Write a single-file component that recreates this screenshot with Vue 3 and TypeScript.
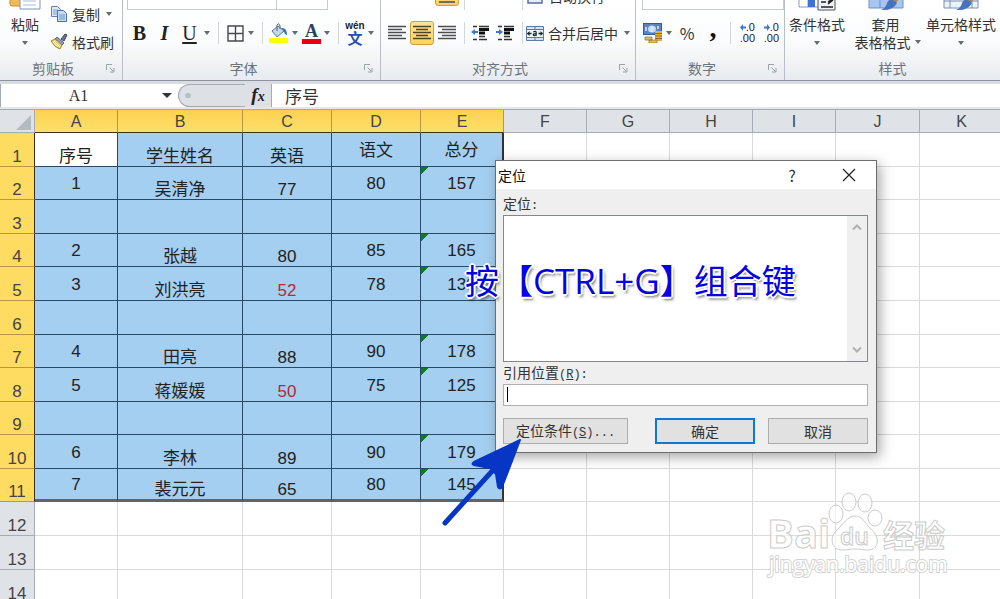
<script setup lang="ts">
import { ref } from 'vue'

interface Row {
  n: number
  tall: boolean
  cells: string[]
}

const columns = ['A', 'B', 'C', 'D', 'E', 'F', 'G', 'H', 'I', 'J', 'K']

const content: string[][] = [
  ['序号', '学生姓名', '英语', '语文', '总分'],
  ['1', '吴清净', '77', '80', '157'],
  [],
  ['2', '张越', '80', '85', '165'],
  ['3', '刘洪亮', '52', '78', '130'],
  [],
  ['4', '田亮', '88', '90', '178'],
  ['5', '蒋媛媛', '50', '75', '125'],
  [],
  ['6', '李林', '89', '90', '179'],
  ['7', '裴元元', '65', '80', '145'],
  [],
  [],
  []
]

const shortRows = [2, 4, 7, 9, 11]

const rows: Row[] = content.map((cells, i) => ({
  n: i + 1,
  tall: !shortRows.includes(i + 1),
  cells: columns.map((_, c) => cells[c] ?? '')
}))

const cellClass = (row: Row, c: number) => ({
  picked: row.n <= 11 && c < 5,
  active: row.n === 1 && c === 0,
  low: c === 1 || c === 2 || (row.n === 1 && c === 0),
  edge: row.n <= 11 && c === 4,
  last: row.n === 11 && c < 5,
  failed: c === 2 && row.n > 1 && Number(row.cells[c]) > 0 && Number(row.cells[c]) < 60,
  flagged: c === 4 && row.n > 1 && row.cells[c] !== ''
})

const nameBox = ref('A1')
const formula = ref('序号')
const reference = ref('')
</script>

<template>
  <div class="window">
    <header class="ribbon">
      <section class="group clip">
        <div class="tools across">
          <button class="big paste" type="button">
            <svg width="36" height="32" viewBox="0 0 36 32">
              <rect x="3" y="2" width="24" height="25" rx="2" fill="#f0b95c" stroke="#c98a2c" />
              <path d="M13 6h15l5 5v19H13z" fill="#fff" stroke="#7d93b4" />
              <path d="M16 14h13M16 18h13M16 22h13M16 26h13" stroke="#a9bbd6" />
            </svg>
            <span>粘贴</span>
            <i class="tri"></i>
          </button>
          <div class="stack">
            <button class="line-btn" type="button">
              <svg width="18" height="18" viewBox="0 0 18 18">
                <path d="M1.500 1.500h6l3 3v7h-9z" fill="#dbe8f8" stroke="#6184b8" />
                <path d="M3 5h5M3 7h5M3 9h5" stroke="#7fa2d3" />
                <path d="M7.500 5.500h6l3 3v8h-9z" fill="#c7dbf4" stroke="#4a70ab" />
                <path d="M9 10h6M9 12h6M9 14h6" stroke="#6f96cd" />
              </svg>
              复制<i class="tri"></i>
            </button>
            <button class="line-btn" type="button">
              <svg width="18" height="18" viewBox="0 0 18 18">
                <path d="M11 6l4-5 2 1-3 6z" fill="#6e6f94" stroke="#45466b" />
                <path d="M7 4l7 6-2 2-7-6z" fill="#8f9ab8" stroke="#5a648a" />
                <path d="M1 8l4-2 7 6-2 4q-5-1-9-8z" fill="#e9d777" stroke="#a38930" />
                <path d="M4 8l6 6M3 9l5 5" stroke="#fff8c9" />
              </svg>
              格式刷
            </button>
          </div>
        </div>
        <h2 class="caption"><span>剪贴板</span><svg class="launch" width="9" height="9" viewBox="0 0 9 9"><path d="M.5 6V.5H6M3.500 3.500l4 4M8 4v4H4" /></svg></h2>
      </section>

      <section class="group font">
        <div class="tools">
          <div class="bar upper">
            <select class="font-name" aria-label="字体名称"></select>
            <select class="font-size" aria-label="字号"></select>
            <button class="ico letter" type="button">A</button>
            <button class="ico letter" type="button">A</button>
          </div>
          <div class="bar">
            <button class="ico serif bold" type="button">B</button>
            <button class="ico serif italic" type="button">I</button>
            <button class="ico serif under" type="button">U</button>
            <button class="more" type="button" aria-label="下划线选项"><i class="tri"></i></button>
            <i class="sep"></i>
            <button class="ico" type="button" aria-label="边框">
              <svg width="17" height="17" viewBox="0 0 17 17"><path d="M1 1h15v15H1zM8.500 1v15M1 8.500h15" fill="none" stroke="#454a50" stroke-width="1.400" /></svg>
            </button>
            <button class="more" type="button" aria-label="边框选项"><i class="tri"></i></button>
            <i class="sep"></i>
            <button class="ico" type="button" aria-label="填充颜色">
              <svg width="20" height="20" viewBox="0 0 20 20">
                <path d="M3 8l6-5 6 5-7 6z" fill="#c5d6e8" stroke="#5d7592" />
                <path d="M8 8V2q2-3 3 1v3" fill="none" stroke="#4a5f7c" />
                <path d="M12 5q6-1 6 7-3-1-3-4z" fill="#3c6fb8" />
                <path d="M0 15h19v5H0z" fill="#ffff00" />
              </svg>
            </button>
            <button class="more" type="button" aria-label="填充颜色选项"><i class="tri"></i></button>
            <button class="ico color-a" type="button">A</button>
            <button class="more" type="button" aria-label="字体颜色选项"><i class="tri"></i></button>
            <i class="sep"></i>
            <button class="ico pinyin" type="button"><span>wén</span><b>文</b></button>
            <button class="more" type="button" aria-label="拼音选项"><i class="tri"></i></button>
          </div>
        </div>
        <h2 class="caption"><span>字体</span><svg class="launch" width="9" height="9" viewBox="0 0 9 9"><path d="M.5 6V.5H6M3.500 3.500l4 4M8 4v4H4" /></svg></h2>
      </section>

      <section class="group align">
        <div class="tools">
          <div class="bar upper">
            <i class="hole"></i>
            <i class="hole"></i>
            <button class="ico on upper-on" type="button" aria-label="底端对齐">
              <svg width="18" height="18" viewBox="0 0 18 18"><path d="M1 11h16M4 14h10M1 17h16" stroke="#4a4a48" stroke-width="1.500" /></svg>
            </button>
            <i class="sep"></i>
            <i class="hole"></i>
            <i class="hole"></i>
            <i class="sep"></i>
            <button class="line-btn wrap" type="button">
              <svg width="16" height="18" viewBox="0 0 16 18"><path d="M1 1h14v15H1z" fill="#e4edf8" stroke="#54719e" stroke-width="1.500" /></svg>
              自动换行
            </button>
          </div>
          <div class="bar">
            <button class="ico" type="button" aria-label="左对齐">
              <svg width="18" height="16" viewBox="0 0 18 16"><path d="M0 1.500h18M0 4.500h14M0 7.500h18M0 10.500h14M0 13.500h18" stroke="#4a4d52" stroke-width="1.300" /></svg>
            </button>
            <button class="ico on" type="button" aria-label="居中">
              <svg width="18" height="16" viewBox="0 0 18 16"><path d="M0 1.500h18M3 4.500h12M0 7.500h18M3 10.500h12M0 13.500h18" stroke="#4f4326" stroke-width="1.300" /></svg>
            </button>
            <button class="ico" type="button" aria-label="右对齐">
              <svg width="18" height="16" viewBox="0 0 18 16"><path d="M0 1.500h18M4 4.500h14M0 7.500h18M4 10.500h14M0 13.500h18" stroke="#4a4d52" stroke-width="1.300" /></svg>
            </button>
            <i class="sep"></i>
            <button class="ico" type="button" aria-label="减少缩进量">
              <svg width="18" height="16" viewBox="0 0 18 16">
                <path d="M2 1.500h4M8 1.500h10M2 14.500h4M8 14.500h8M8 11.500h6" stroke="#333" stroke-width="1.300" />
                <path d="M8 4.500h10M8 8h6" stroke="#111" stroke-width="3" />
                <path d="M0 7l4-3v2h3v2H4v2z" fill="#3c78cc" />
              </svg>
            </button>
            <button class="ico" type="button" aria-label="增加缩进量">
              <svg width="18" height="16" viewBox="0 0 18 16">
                <path d="M2 1.500h4M8 1.500h10M2 14.500h4M8 14.500h8M8 11.500h6" stroke="#333" stroke-width="1.300" />
                <path d="M8 4.500h10M8 8h6" stroke="#111" stroke-width="3" />
                <path d="M7 7L3 4v2H0v2h3v2z" fill="#3c78cc" />
              </svg>
            </button>
            <i class="sep"></i>
            <button class="line-btn" type="button">
              <svg width="18" height="15" viewBox="0 0 18 15">
                <path d="M.5.500h17v14H.5zM.5 3.500h17M.5 11.500h17M9 .5v3M9 11.500v3" fill="#d3e2f5" stroke="#5c7ba8" />
                <path d="M1 4h16v7H1z" fill="#eef4fc" />
                <path d="M1.500 7.500h4M16.500 7.500h-4" stroke="#222" stroke-width="1.300" />
                <path d="M1 7.500l2.500-2.500v5zM17 7.500l-2.500-2.500v5z" fill="#222" />
                <path d="M7.300 6q2.700-1.500 2.900.8v3M10.200 7.500q-3.200 0-2.900 1.500.9 1.300 2.900-.3" fill="none" stroke="#222" stroke-width="1.200" />
              </svg>
              合并后居中<i class="tri"></i>
            </button>
          </div>
        </div>
        <h2 class="caption"><span>对齐方式</span><svg class="launch" width="9" height="9" viewBox="0 0 9 9"><path d="M.5 6V.5H6M3.500 3.500l4 4M8 4v4H4" /></svg></h2>
      </section>

      <section class="group number">
        <div class="tools">
          <div class="bar upper">
            <select class="format" aria-label="数字格式"><option>常规</option></select>
          </div>
          <div class="bar">
            <button class="ico" type="button" aria-label="会计数字格式">
              <svg width="20" height="20" viewBox="0 0 20 20">
                <rect x=".5" y=".5" width="18" height="11" fill="#5a82c4" stroke="#34589a" />
                <ellipse cx="9" cy="6" rx="4" ry="3.500" fill="#c9daf3" />
                <path d="M3 4v4M15 3v3M9 3v6" stroke="#dfe9f8" stroke-width="1.500" />
                <path d="M12 8h7v10h-7z" fill="#e3b13e" />
                <path d="M12 10.500h7M12 13h7M12 15.500h7" stroke="#98691b" />
                <path d="M2 14h7v3H2zM6 17h8v3H6z" fill="#e8bd54" stroke="#98691b" stroke-width=".7" />
              </svg>
            </button>
            <button class="more" type="button" aria-label="货币选项"><i class="tri"></i></button>
            <button class="ico wide" type="button">%</button>
            <button class="ico wide comma" type="button">,</button>
            <i class="sep thin"></i>
            <button class="ico dec" type="button">
              <span><svg width="6" height="7" viewBox="0 0 6 7"><path d="M0 3.500L3 0v2.500h3v2H3V7z" fill="#3c78cc" /></svg>.0</span>
              <span>.00</span>
            </button>
            <button class="ico dec" type="button">
              <span><svg width="6" height="7" viewBox="0 0 6 7"><path d="M6 3.500L3 0v2.500H0v2h3V7z" fill="#3c78cc" /></svg>.0</span>
              <span>.00</span>
            </button>
          </div>
        </div>
        <h2 class="caption"><span>数字</span><svg class="launch" width="9" height="9" viewBox="0 0 9 9"><path d="M.5 6V.5H6M3.500 3.500l4 4M8 4v4H4" /></svg></h2>
      </section>

      <section class="group styles">
        <div class="tools across spread">
          <button class="big" type="button">
            <svg width="38" height="32" viewBox="0 0 38 32">
              <path d="M1 1h28v27H1zM10 1v27M1 10h28M1 19h28" fill="#fff" stroke="#8b9bb3" />
              <path d="M10 1h7v27h-7z" fill="#3f72d8" />
              <path d="M20 14h17v17H20z" fill="#eef1f5" stroke="#555" />
              <path d="M23 19h5M23 23h5M23 28h12M30 17l5 3-5 3M35 21l-5 4" fill="none" stroke="#222" stroke-width="1.500" />
            </svg>
            <span>条件格式</span>
            <i class="tri"></i>
          </button>
          <button class="big" type="button">
            <svg width="36" height="32" viewBox="0 0 36 32">
              <path d="M1 1h34v28H1zM12 1v28M24 1v28M1 20h34" fill="#a9c6f2" stroke="#6c8fc7" />
              <path d="M35 8L24 20l4 4 8-11z" fill="#b98240" />
              <path d="M24 20l5 4q-4 8-16 7 5-2 6-7 2-4 5-4z" fill="#4474c0" />
            </svg>
            <span>套用</span>
            <span class="with-tri">表格格式<i class="tri"></i></span>
          </button>
          <button class="big" type="button">
            <svg width="36" height="32" viewBox="0 0 36 32">
              <path d="M1 1h34v28H1zM7 1v28M29 1v28M1 22h34" fill="#edf2fa" stroke="#7d90b0" />
              <path d="M35 8L24 20l4 4 8-11z" fill="#b98240" />
              <path d="M24 20l5 4q-4 8-16 7 5-2 6-7 2-4 5-4z" fill="#4474c0" />
            </svg>
            <span>单元格样式</span>
            <i class="tri"></i>
          </button>
        </div>
        <h2 class="caption"><span>样式</span></h2>
      </section>
    </header>

    <div class="formula-bar">
      <div class="name-box">
        <input v-model="nameBox" aria-label="名称框" />
        <i class="tri dark"></i>
      </div>
      <div class="fx-area">
        <div class="pill"><i></i></div>
        <button class="fx" type="button">f<small>x</small></button>
      </div>
      <input v-model="formula" class="formula" aria-label="编辑栏" />
    </div>

    <main class="sheet">
      <table>
        <colgroup>
          <col class="c-head" />
          <col v-for="c in columns" :key="c" :class="'c-' + c" />
        </colgroup>
        <thead>
          <tr>
            <th class="corner"><svg width="15" height="15" viewBox="0 0 15 15"><path d="M15 0v15H0z" fill="#b4bac2" /></svg></th>
            <th v-for="(c, i) in columns" :key="c" scope="col" :class="{ lit: i < 5 }">{{ c }}</th>
          </tr>
        </thead>
        <tbody>
          <tr v-for="row in rows" :key="row.n" :class="{ tall: row.tall }">
            <th scope="row" :class="{ lit: row.n <= 11 }">{{ row.n }}</th>
            <td v-for="(text, c) in row.cells" :key="c" :class="cellClass(row, c)">{{ text }}</td>
          </tr>
        </tbody>
      </table>
    </main>

    <form class="dialog" role="dialog" aria-labelledby="goto-title" @submit.prevent>
      <div class="titlebar">
        <h1 id="goto-title">定位</h1>
        <button type="button" class="help">?</button>
        <button type="button" class="close" aria-label="关闭">
          <svg width="14" height="14" viewBox="0 0 14 14"><path d="M1 1l12 12M13 1L1 13" stroke="#222" stroke-width="1.200" /></svg>
        </button>
      </div>
      <div class="dialog-body">
        <label for="places">定位<span class="mono">:</span></label>
        <div class="list">
          <select id="places" size="6"></select>
          <div class="scroll">
            <button type="button" aria-label="向上滚动"><svg width="10" height="8" viewBox="0 0 10 8"><path d="M1 6.500l4-4 4 4" /></svg></button>
            <button type="button" aria-label="向下滚动"><svg width="10" height="8" viewBox="0 0 10 8"><path d="M1 1.500l4 4 4-4" /></svg></button>
          </div>
        </div>
        <label for="reference">引用位置<span class="mono">(<u>R</u>):</span></label>
        <div class="entry">
          <input id="reference" v-model="reference" />
          <i class="caret"></i>
        </div>
        <div class="actions">
          <button type="button" class="special">定位条件<span class="mono">(<u>S</u>)...</span></button>
          <button type="submit" class="primary">确定</button>
          <button type="button">取消</button>
        </div>
      </div>
    </form>

    <p class="callout">按【<span>CTRL+G</span>】组合键</p>

    <svg class="arrow" width="84" height="92" viewBox="0 0 84 92">
      <path d="M5 87L54 33" stroke="#0836c4" stroke-width="5" stroke-linecap="round" />
      <path d="M80 4L34 26q-3 2 0 3l16 3 6 6 2 13q2 3 4 0z" fill="#0836c4" stroke="#0836c4" stroke-width="2" stroke-linejoin="round" />
    </svg>

    <svg class="watermark" width="190" height="96" viewBox="0 0 190 96">
      <g fill="#fff" fill-opacity=".6" stroke="#cbcbcb">
        <ellipse cx="71" cy="26" rx="7" ry="9" />
        <ellipse cx="84" cy="14" rx="7" ry="9" />
        <ellipse cx="100" cy="15" rx="7" ry="9" />
        <ellipse cx="110" cy="30" rx="7" ry="8" />
        <path d="M90 28c8 0 11 9 17 14 8 7 7 20-4 20-5 0-8-1-13-1s-8 1-13 1c-11 0-13-13-5-20 6-5 10-14 18-14z" />
        <text x="2" y="60" font-size="40" font-weight="700" class="latin">Bai</text>
        <text x="75" y="57" font-size="23" font-weight="600" class="latin">du</text>
        <text x="118" y="59" font-size="31" font-weight="700" class="cjk">经验</text>
      </g>
      <text x="4" y="84" font-size="21" fill="#fff" stroke="#d4d4d4" stroke-width="2" paint-order="stroke" class="latin">jingyan.baidu.com</text>
    </svg>
  </div>
</template>

<style>
html,
body {
  margin: 0;
  height: 100%;
  overflow: hidden;
}

#app {
  height: 100%;
}
</style>

<style scoped>
.window {
  position: relative;
  display: flex;
  flex-direction: column;
  height: 100%;
  overflow: hidden;
  background: #fff;
  color: #333;
  font: 14px/18px "Noto Sans CJK SC", sans-serif;
}

button,
input,
select {
  box-sizing: border-box;
  margin: 0;
  padding: 0;
  border: 0;
  border-radius: 0;
  background: none;
  color: inherit;
  font: inherit;
  appearance: none;
  outline: 0;
}

svg {
  display: block;
  flex: none;
  fill: none;
}

/* Ribbon */
.ribbon {
  display: flex;
  flex: none;
  height: 80px;
  overflow: hidden;
  border-bottom: 1px solid #8d949f;
  background: linear-gradient(#fff 0%, #fbfcfd 50%, #e8ebef 100%);
}

.group {
  box-sizing: border-box;
  display: flex;
  flex-direction: column;
  flex: none;
  height: 80px;
  border-right: 1px solid #b9bec6;
}

.clip { width: 123px; }
.font { width: 258px; }
.align { width: 255px; }
.number { width: 149px; }
.styles { flex: 1; border-right: 0; }

.tools {
  display: flex;
  flex: none;
  flex-direction: column;
  justify-content: flex-end;
  gap: 9px;
  box-sizing: border-box;
  height: 58px;
  padding: 0 0 11px 4px;
}

.tools.across {
  flex-direction: row;
  justify-content: flex-start;
  align-items: flex-end;
  gap: 0;
  padding: 0 0 7px;
}

.tools.spread {
  justify-content: space-between;
  padding: 0 4px 7px;
}

.number .tools { padding-left: 6px; }

.caption {
  display: flex;
  align-items: center;
  height: 20px;
  margin: 0;
  padding: 0 7px 0 0;
  color: #6c747e;
  font-size: 14px;
  font-weight: 400;
}

.caption span {
  flex: 1;
  text-align: center;
}

.styles .caption { padding: 0; }
.launch { stroke: #9aa1aa; }

.big {
  display: flex;
  flex-direction: column;
  flex: none;
  align-items: center;
}

.big svg { margin-bottom: 4px; }
.big .tri { margin: 8px 0 6px; }
.paste { width: 50px; }

.with-tri {
  display: flex;
  align-items: center;
  gap: 4px;
}

.big .with-tri .tri {
  margin: 0 -4px 0 0;
}

.stack {
  display: flex;
  flex-direction: column;
  gap: 10px;
}

.line-btn {
  display: flex;
  align-items: center;
  gap: 4px;
  white-space: nowrap;
}

.line-btn .tri { margin-left: 2px; }

.tri {
  width: 0;
  height: 0;
  flex: none;
  border: 3px solid transparent;
  border-top: 4px solid #646a72;
  border-bottom: 0;
}

.bar {
  display: flex;
  flex: none;
  align-items: center;
  height: 28px;
}

.bar.upper {
  align-items: flex-end;
  height: 10px;
}

.ico {
  display: flex;
  flex: none;
  align-items: center;
  justify-content: center;
  width: 22px;
  height: 24px;
}

.more {
  display: flex;
  flex: none;
  align-items: center;
  justify-content: center;
  width: 10px;
  height: 24px;
}

.wide { width: 26px; font-size: 16px; }

.sep {
  flex: none;
  width: 12px;
  height: 22px;
  background: linear-gradient(#d3d7dc, #d3d7dc) center / 1px 100% no-repeat;
}

.upper .sep { height: 15px; }

.serif {
  width: 25px;
  color: #222;
  font: 20px/24px "Liberation Serif", serif;
}

.bold { font-weight: 700; }
.italic { font-style: italic; font-weight: 700; }
.under { text-decoration: underline; text-underline-offset: 2px; }

.font-name,
.font-size,
.format {
  height: 25px;
  padding: 0 6px 10px;
  border: 1px solid #c6cbd2;
  background: #fff;
}

.font-name { width: 150px; }
.font-size { width: 52px; margin-left: -1px; }
.format { width: 142px; }

.letter {
  height: 28px;
  padding-bottom: 4px;
  font: 700 18px/18px "Liberation Serif", serif;
}

.color-a {
  width: 19px;
  height: 21px;
  align-items: flex-start;
  margin: 0 1px 0 2px;
  border-bottom: 5px solid #e8000b;
  color: #2a4068;
  font: 700 18px/16px "Liberation Serif", serif;
}

.pinyin {
  flex-direction: column;
  color: #222;
}

.pinyin span {
  font: 700 10px/10px "Liberation Sans", sans-serif;
}

.pinyin b {
  color: #2450b8;
  font-size: 15px;
  line-height: 14px;
}

.align .ico,
.align .hole { width: 24px; margin-right: 1px; }
.align .sep { width: 8px; }

.on {
  box-sizing: border-box;
  border: 1px solid #c9a044;
  border-radius: 3px;
  background: linear-gradient(#fde39a, #fdd35c);
}

.upper-on { margin-bottom: 4px; }
.wrap { height: 28px; }
.wrap svg { margin: 0 2px 0 1px; }

.comma {
  padding-bottom: 10px;
  color: #111;
  font: 700 28px/20px "Liberation Serif", serif;
}

.thin { width: 8px; }

.dec {
  flex-direction: column;
  align-items: flex-end;
  width: 24px;
  padding-right: 3px;
  color: #222;
  font: 11px/11px "Liberation Sans", sans-serif;
}

.dec span {
  display: flex;
  align-items: center;
}

/* Formula bar */
.formula-bar {
  display: flex;
  flex: none;
  height: 23px;
  padding-bottom: 2px;
  border-top: 3px solid #d9dde3;
  border-bottom: 1px solid #a3aab4;
  background: #e3e7ec;
}

.name-box {
  box-sizing: border-box;
  display: flex;
  align-items: center;
  width: 178px;
  padding-right: 6px;
  border-left: 1px solid #a3aab4;
  background: #fff;
}

.name-box input {
  flex: 1;
  min-width: 0;
  padding-right: 6px;
  text-align: center;
  font: 16px/22px "Liberation Serif", serif;
}

.dark {
  border-width: 5px 5px 0;
  border-top-color: #333;
}

.fx-area {
  box-sizing: border-box;
  display: flex;
  width: 94px;
  border-right: 1px solid #a3aab4;
  background: linear-gradient(90deg, #fff 10px, #dde1e6 10px);
}

.pill {
  flex: 1;
  padding: 8px 0 0 6px;
  border: 1px solid #a3aab4;
  border-width: 1px 0 1px 1px;
  border-radius: 12px 0 0 12px;
  background: #dde1e6;
}

.pill i {
  display: block;
  width: 6px;
  height: 5px;
  border-radius: 3px;
  background: #b7bdc5;
}

.fx {
  width: 26px;
  color: #222;
  font: italic 700 19px/22px "Liberation Serif", serif;
  text-align: center;
}

.fx small { font-size: 14px; }

.formula {
  flex: 1;
  min-width: 0;
  padding-left: 13px;
  background: #fff;
  font-size: 17px;
}

/* Sheet */
.sheet {
  flex: 1;
  min-height: 0;
  overflow: hidden;
}

table {
  width: max-content;
  border-spacing: 0;
  color: #222;
  font: 17px/18px "Liberation Sans", "Noto Sans CJK SC", sans-serif;
}

.c-head { width: 35px; }
.c-A, .c-E, .c-F, .c-G, .c-H, .c-I { width: 83px; }
.c-B { width: 125px; }
.c-C, .c-D { width: 89px; }
.c-J, .c-K { width: 84px; }

th,
td {
  box-sizing: border-box;
  padding: 2px 0 0;
  border: 0 solid #dadada;
  border-width: 0 1px 1px 0;
  text-align: center;
  vertical-align: middle;
  font-weight: 400;
}

thead th {
  height: 23px;
  border-color: #a7adb6;
  background: #dfe3e8;
  color: #444;
  font-size: 16px;
}

thead th.lit {
  border-color: #bd953e;
  border-bottom-color: #3d3418;
  background: linear-gradient(#fcd14f, #fde06c);
}

.corner svg { margin: 1px 3px 0 auto; }

tbody tr { height: 33px; }
tbody tr.tall { height: 34px; }

tbody th {
  border-color: #a7adb6;
  background: #dfe3e8;
  color: #444;
  vertical-align: bottom;
}

tbody th.lit {
  border-color: #bd953e;
  border-right-color: #3a2f16;
  background: #fedb61;
}

.picked {
  border-color: #274a68;
  background: #a5cff0;
}

.active { background: #fff; }
.low { vertical-align: bottom; }
.edge { border-right: 2px solid #333; }
.last { border-bottom: 3px solid #5e6468; }
.failed { color: #b22a35; }

.flagged {
  background: linear-gradient(135deg, #0a7d20 5px, transparent 5px) #a5cff0;
}

/* Go To dialog */
.dialog {
  position: absolute;
  top: 160px;
  left: 495px;
  box-sizing: border-box;
  width: 382px;
  border: 1px solid #6e6e6e;
  background: #efefef;
  box-shadow: 3px 4px 12px rgba(0, 0, 0, 0.35);
}

.titlebar {
  display: flex;
  align-items: center;
  height: 28px;
  padding: 0 20px 0 2px;
  background: #fff;
}

.titlebar h1 {
  flex: 1;
  margin: 0;
  color: #111;
  font-size: 14px;
  font-weight: 400;
}

.help {
  width: 16px;
  margin-right: 42px;
  font-size: 16px;
}

.dialog-body {
  display: flex;
  flex-direction: column;
  padding: 4px 8px 8px 7px;
}

.dialog-body label {
  height: 22px;
  line-height: 20px;
}

.mono {
  font-family: "Liberation Mono", monospace;
  font-size: 12px;
}

.list {
  display: flex;
  box-sizing: border-box;
  height: 147px;
  border: 1px solid #84878c;
  background: #fff;
}

.list select {
  flex: 1;
  height: 100%;
  overflow: hidden;
}

.scroll {
  display: flex;
  flex-direction: column;
  justify-content: space-between;
  width: 20px;
  background: #efefef;
}

.scroll button {
  display: flex;
  align-items: center;
  justify-content: center;
  height: 22px;
}

.scroll svg {
  stroke: #b0b0b0;
  stroke-width: 2;
}

.entry {
  position: relative;
  display: flex;
}

.entry input {
  flex: 1;
  height: 22px;
  padding: 0 4px;
  border: 1px solid #b0b0b0;
  background: #fff;
}

.caret {
  position: absolute;
  top: 3px;
  left: 4px;
  width: 1px;
  height: 15px;
  background: #000;
}

.actions {
  display: flex;
  gap: 13px;
  margin-top: 12px;
}

.actions button {
  width: 100px;
  height: 26px;
  border: 1px solid #adadad;
  background: #e1e1e1;
}

.actions .special {
  width: 125px;
  margin-right: auto;
}

.actions .primary { border: 2px solid #0f78d0; }

/* Annotations over the sheet */
.callout {
  position: absolute;
  top: 258px;
  left: 465px;
  margin: 0;
  color: #0202e4;
  font: 34px/46px "Open Sans", "Noto Sans CJK SC", sans-serif;
  text-spacing-trim: space-all;
  white-space: nowrap;
  text-shadow: -1px -1px 0 #fff, 1px -1px 0 #fff, -1px 1px 0 #fff, 1px 1px 0 #fff, 0 2px 0 #fff,
    2px 0 0 #fff, -2px 0 0 #fff, 0 -2px 0 #fff, 2px 3px 3px rgba(0, 0, 0, 0.6);
}

.callout span { font-size: 35px; }

.arrow {
  position: absolute;
  top: 436px;
  left: 440px;
}

.watermark {
  position: absolute;
  top: 488px;
  left: 765px;
}

.latin { font-family: "Open Sans", sans-serif; }
.cjk { font-family: "Noto Sans CJK SC", sans-serif; }
</style>
